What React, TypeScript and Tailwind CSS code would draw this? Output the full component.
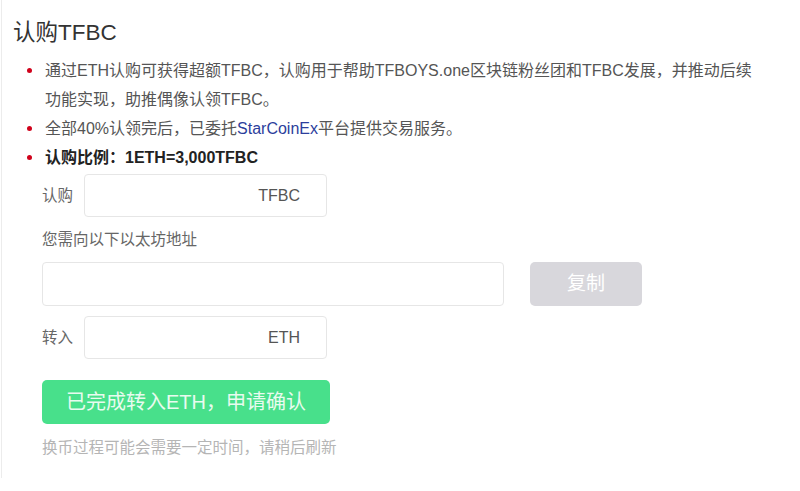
export default function App() {
  return (
    <div
      className="w-[800px] h-[491px] bg-white overflow-hidden"
      style={{ fontFamily: '"Liberation Sans", "Noto Sans CJK SC", sans-serif' }}
    >
      <div className="ml-[1px] h-[478px] border-l border-[#ececec] pl-[11px] pt-[18px]">
        <h2 className="text-[22.5px] leading-[30px] text-[#333]">认购TFBC</h2>

        <ul className="mt-[8px] text-[16px] leading-[29px] text-[#555]">
          <li className="flex">
            <span className="w-[32px] shrink-0 flex justify-center pt-[12px]">
              <span className="block w-[5px] h-[5px] rounded-full bg-[#d0021b]" />
            </span>
            <span className="w-[712px]">
              通过ETH认购可获得超额TFBC，认购用于帮助TFBOYS.one区块链粉丝团和TFBC发展，并推动后续功能实现，助推偶像认领TFBC。
            </span>
          </li>
          <li className="flex">
            <span className="w-[32px] shrink-0 flex justify-center pt-[12px]">
              <span className="block w-[5px] h-[5px] rounded-full bg-[#d0021b]" />
            </span>
            <span>
              全部40%认领完后，已委托<span className="text-[#2c3e9c]">StarCoinEx</span>平台提供交易服务。
            </span>
          </li>
          <li className="flex font-bold text-[#222]">
            <span className="w-[32px] shrink-0 flex justify-center pt-[12px]">
              <span className="block w-[5px] h-[5px] rounded-full bg-[#d0021b]" />
            </span>
            <span>认购比例：1ETH=3,000TFBC</span>
          </li>
        </ul>

        <div className="pl-[29px] mt-[2px] text-[15.5px] text-[#666]">
          <div className="flex items-center">
            <span className="w-[42px]">认购</span>
            <div className="w-[243px] h-[43px] rounded-[4px] border border-[#e6e6e6] flex items-center justify-end pr-[26px] text-[16px] text-[#555]">
              TFBC
            </div>
          </div>

          <div className="mt-[13px] leading-[20px]">您需向以下以太坊地址</div>

          <div className="mt-[12px] flex items-center">
            <div className="w-[462px] h-[44px] rounded-[4px] border border-[#e6e6e6]" />
            <button className="ml-[26px] w-[112px] h-[44px] rounded-[5px] bg-[#d8d7dc] text-white text-[19px]">
              复制
            </button>
          </div>

          <div className="mt-[10px] flex items-center">
            <span className="w-[42px]">转入</span>
            <div className="w-[243px] h-[43px] rounded-[4px] border border-[#e6e6e6] flex items-center justify-end pr-[26px] text-[16px] text-[#555]">
              ETH
            </div>
          </div>

          <button className="mt-[21px] w-[288px] h-[44px] rounded-[5px] bg-[#48e08b] text-[#e8fbef] text-[20px]">
            已完成转入ETH，申请确认
          </button>

          <div className="mt-[12px] text-[15.5px] text-[#b5b5b5]">换币过程可能会需要一定时间，请稍后刷新</div>
        </div>
      </div>
    </div>
  );
}
